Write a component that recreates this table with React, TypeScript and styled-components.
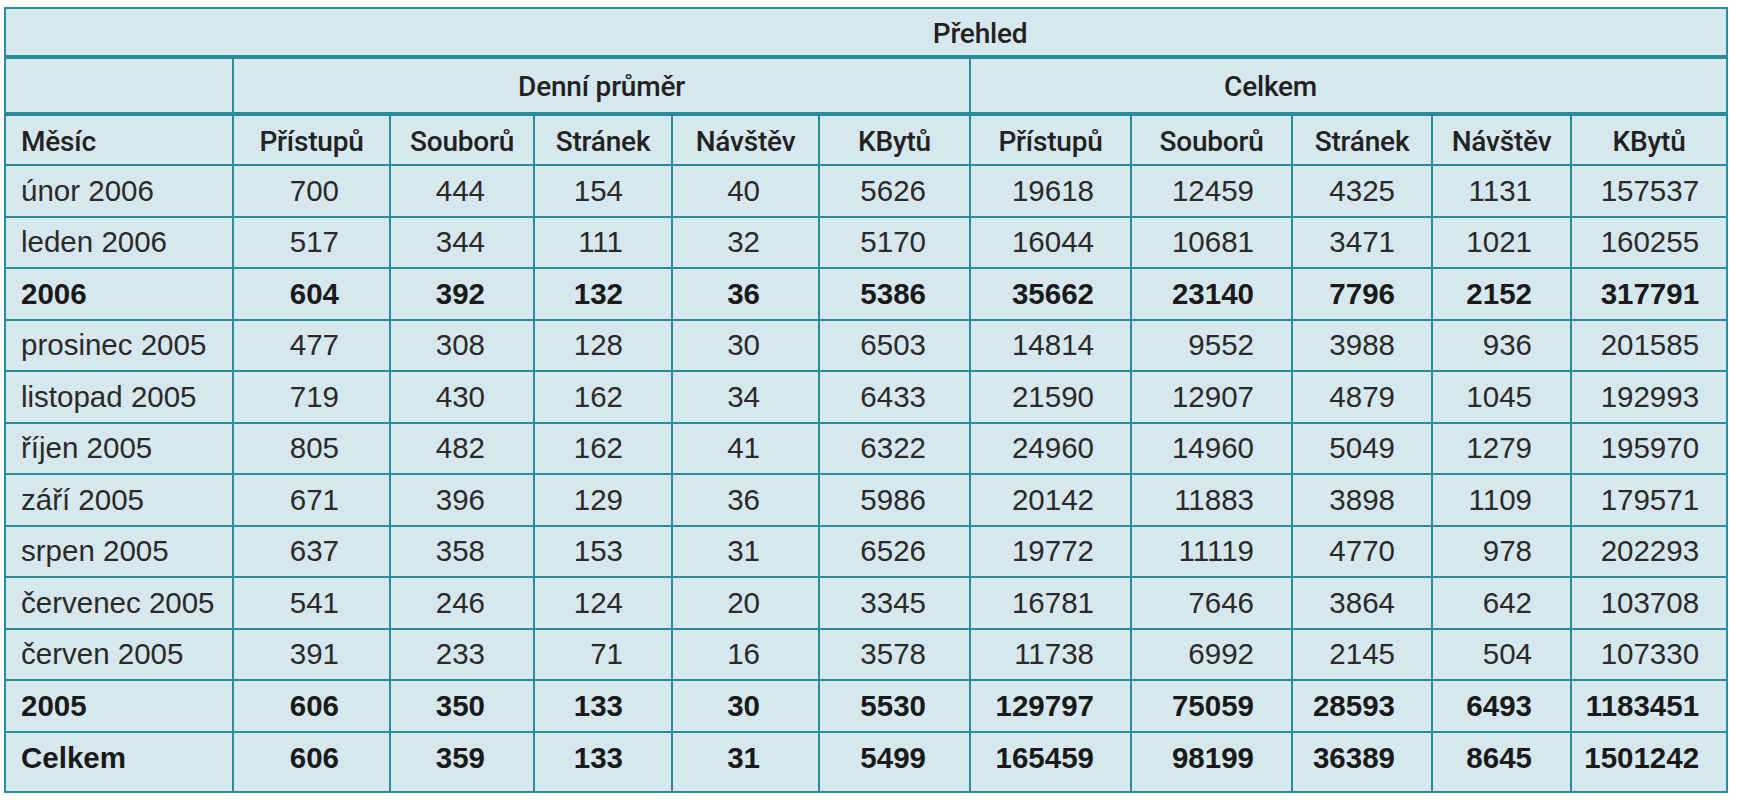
import React from 'react';
import styled, { createGlobalStyle } from 'styled-components';

const LINE = '#2a8b9a';
const BG = '#d6e8ed';

const GlobalStyle = createGlobalStyle`
  html, body { margin: 0; padding: 0; background: #ffffff; }
  body { font-family: "Liberation Sans", Arial, sans-serif; }
`;

const Page = styled.div`
  padding: 7px 0 0 4px;
`;

const Table = styled.table`
  border-collapse: collapse;
  table-layout: fixed;
  width: 1724px;
  background: ${BG};
  color: #1f1f1f;
  border: 2px solid ${LINE};
  font-family: "Liberation Sans", Arial, sans-serif;
`;

const Col = styled.col<{ $w: number }>`
  width: ${(p) => p.$w}px;
`;

const HeadRow = styled.tr<{ $h: number }>`
  height: ${(p) => p.$h}px;
`;

const HeadCell = styled.th<{
  $align?: 'left' | 'center';
  $padL?: number;
  $padR?: number;
  $thick?: boolean;
}>`
  font-family: Roboto, "Liberation Sans", Arial, sans-serif;
  font-weight: 500;
  font-size: 28px;
  letter-spacing: -0.2px;
  color: #222;
  border: 2px solid ${LINE};
  border-bottom-width: ${(p) => (p.$thick ? 4 : 2)}px;
  text-align: ${(p) => p.$align ?? 'center'};
  padding: 2px ${(p) => p.$padR ?? 0}px 0 ${(p) => p.$padL ?? 0}px;
  white-space: nowrap;
  vertical-align: middle;
`;

const DataRow = styled.tr<{ $h: number }>`
  height: ${(p) => p.$h}px;
`;

const Cell = styled.td<{ $bold?: boolean; $first?: boolean; $padR?: number; $padB?: number }>`
  font-family: "Liberation Sans", Arial, sans-serif;
  font-size: 29.5px;
  font-weight: ${(p) => (p.$bold ? 700 : 400)};
  color: ${(p) => (p.$bold ? '#1a1a1a' : '#2a2a2a')};
  border: 2px solid ${LINE};
  text-align: ${(p) => (p.$first ? 'left' : 'right')};
  padding: 0 ${(p) => (p.$first ? 0 : p.$padR ?? 40)}px ${(p) => p.$padB ?? 0}px
    ${(p) => (p.$first ? 15 : 0)}px;
  white-space: nowrap;
  vertical-align: middle;
`;

const widths = [228, 157, 144, 138, 147, 151, 161, 161, 140, 139, 156];
const padRight = [50, 48, 48, 58, 43, 36, 37, 36, 38, 27];
const headers = ['Přístupů', 'Souborů', 'Stránek', 'Návštěv', 'KBytů'];

type Row = { label: string; values: number[]; bold?: boolean };

const rows: Row[] = [
  { label: 'únor 2006', values: [700, 444, 154, 40, 5626, 19618, 12459, 4325, 1131, 157537] },
  { label: 'leden 2006', values: [517, 344, 111, 32, 5170, 16044, 10681, 3471, 1021, 160255] },
  { label: '2006', bold: true, values: [604, 392, 132, 36, 5386, 35662, 23140, 7796, 2152, 317791] },
  { label: 'prosinec 2005', values: [477, 308, 128, 30, 6503, 14814, 9552, 3988, 936, 201585] },
  { label: 'listopad 2005', values: [719, 430, 162, 34, 6433, 21590, 12907, 4879, 1045, 192993] },
  { label: 'říjen 2005', values: [805, 482, 162, 41, 6322, 24960, 14960, 5049, 1279, 195970] },
  { label: 'září 2005', values: [671, 396, 129, 36, 5986, 20142, 11883, 3898, 1109, 179571] },
  { label: 'srpen 2005', values: [637, 358, 153, 31, 6526, 19772, 11119, 4770, 978, 202293] },
  { label: 'červenec 2005', values: [541, 246, 124, 20, 3345, 16781, 7646, 3864, 642, 103708] },
  { label: 'červen 2005', values: [391, 233, 71, 16, 3578, 11738, 6992, 2145, 504, 107330] },
  { label: '2005', bold: true, values: [606, 350, 133, 30, 5530, 129797, 75059, 28593, 6493, 1183451] },
  { label: 'Celkem', bold: true, values: [606, 359, 133, 31, 5499, 165459, 98199, 36389, 8645, 1501242] },
];

export default function App() {
  return (
    <>
      <GlobalStyle />
      <Page>
        <Table>
          <colgroup>
            {widths.map((w, i) => (
              <Col key={i} $w={w} />
            ))}
          </colgroup>
          <thead>
            <HeadRow $h={49}>
              <HeadCell colSpan={11} $thick $padL={228}>
                Přehled
              </HeadCell>
            </HeadRow>
            <HeadRow $h={57}>
              <HeadCell $thick />
              <HeadCell colSpan={5} $thick>
                Denní průměr
              </HeadCell>
              <HeadCell colSpan={5} $thick $padR={156}>
                Celkem
              </HeadCell>
            </HeadRow>
            <HeadRow $h={51}>
              <HeadCell $align="left" $padL={15}>
                Měsíc
              </HeadCell>
              {[...headers, ...headers].map((h, i) => (
                <HeadCell key={i}>{h}</HeadCell>
              ))}
            </HeadRow>
          </thead>
          <tbody>
            {rows.map((r, ri) => {
              const last = ri === rows.length - 1;
              return (
                <DataRow key={r.label} $h={last ? 60 : 51.5}>
                  <Cell $first $bold={r.bold} $padB={last ? 8 : 0}>
                    {r.label}
                  </Cell>
                  {r.values.map((v, i) => (
                    <Cell key={i} $bold={r.bold} $padR={padRight[i]} $padB={last ? 8 : 0}>
                      {v}
                    </Cell>
                  ))}
                </DataRow>
              );
            })}
          </tbody>
        </Table>
      </Page>
    </>
  );
}
